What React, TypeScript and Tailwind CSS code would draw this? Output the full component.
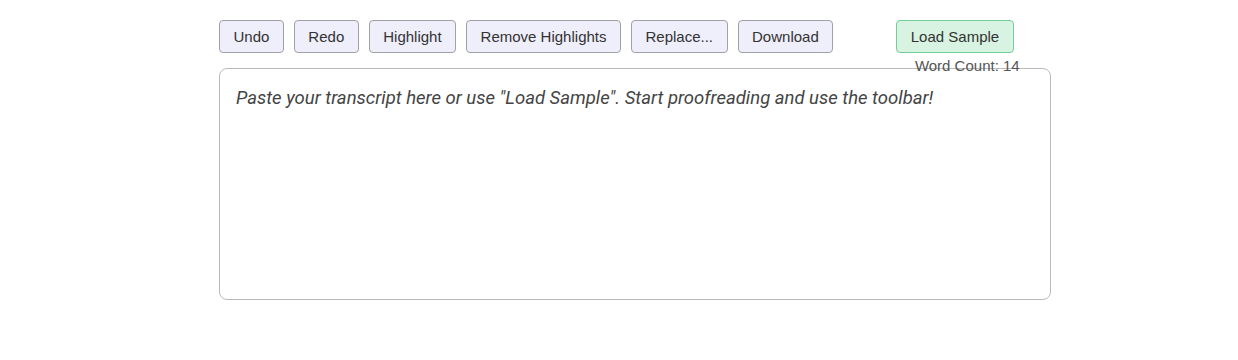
const buttons = ['Undo', 'Redo', 'Highlight', 'Remove Highlights', 'Replace...', 'Download'];

export default function App() {
  return (
    <div className="min-h-[360px] bg-white pl-[219px] pt-[20px] font-['Liberation_Sans',Arial,sans-serif]">
      <div className="flex items-start">
        <div className="flex gap-[10px]">
          {buttons.map((b) => (
            <button
              key={b}
              className="h-[33px] rounded-[4px] border border-[#a0a0a8] bg-[#efeefb] px-[13.5px] pt-[2px] text-[15px] text-[#333]"
            >
              {b}
            </button>
          ))}
        </div>
        <div className="relative ml-[63px]">
          <button className="h-[33px] rounded-[4px] border border-[#6fcf97] bg-[#d8f3e1] px-[13.5px] pt-[2px] text-[15px] text-[#333]">
            Load Sample
          </button>
          <span className="absolute right-[-6px] top-[35px] whitespace-nowrap text-[15px] text-[#555]">
            Word Count: 14
          </span>
        </div>
      </div>
      <div className="mt-[15px] h-[232px] w-[832px] rounded-[8px] border border-[#bbb] px-[16px] pt-[16px]">
        <p className="font-['Roboto',sans-serif] text-[18.5px] italic text-[#444]">
          Paste your transcript here or use "Load Sample". Start proofreading and use the toolbar!
        </p>
      </div>
    </div>
  );
}
